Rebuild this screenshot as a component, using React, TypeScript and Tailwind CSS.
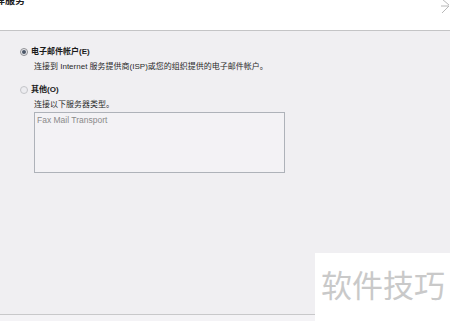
export default function App() {
  const font = { fontFamily: '"Liberation Sans", "Noto Sans CJK SC", sans-serif' };
  return (
    <div className="w-[450px] h-[321px] overflow-hidden flex flex-col bg-[#f0eff2] text-[#1a1a1a]" style={font}>
      <div className="h-[31px] shrink-0 bg-white flex justify-between border-b border-[#c4c4c6]">
        <span className="-ml-[15px] -mt-[6px] text-[10px] font-bold leading-[14px] text-[#202020]">选择服务</span>
        <svg width="10" height="16" viewBox="0 0 10 16" className="-mt-[1px]">
          <path d="M2 0 L9 6 M1 7 L9 7 M2 14 L9 7" stroke="#b8b8b8" strokeWidth="1" fill="none" />
        </svg>
      </div>

      <div className="flex-1 flex">
        <div className="flex-1 flex flex-col pl-[20px] pt-[15px]">
          <label className="flex items-center gap-[3px] h-[12px]">
            <span className="w-[8px] h-[8px] rounded-full border border-[#8e8f93] bg-[#eaeaee] flex items-center justify-center">
              <span className="w-[4px] h-[4px] rounded-full bg-[#4a5566]" />
            </span>
            <span className="text-[8px] font-bold leading-[12px]">电子邮件帐户(E)</span>
          </label>
          <p className="ml-[14px] mt-[3px] text-[8px] leading-[12px] text-[#2a2a2a]">
            连接到 Internet 服务提供商(ISP)或您的组织提供的电子邮件帐户。
          </p>
          <label className="flex items-center gap-[3px] h-[12px] mt-[11px]">
            <span className="w-[8px] h-[8px] rounded-full border border-[#c4c5c9] bg-[#ececf0]" />
            <span className="text-[8px] font-bold leading-[12px]">其他(O)</span>
          </label>
          <p className="ml-[14px] mt-[3px] text-[8px] leading-[12px] text-[#2a2a2a]">连接以下服务器类型。</p>
          <div className="ml-[14px] mt-[1px] w-[251px] h-[61px] border border-[#aeb2b9] bg-[#f3f2f5] px-[2px] pt-[2px] text-[8.5px] leading-[11px] text-[#8a8a8a]">
            Fax Mail Transport
          </div>
        </div>
      </div>

      <div className="h-[68px] shrink-0 flex items-stretch">
        <div className="flex-1 flex flex-col justify-end">
          <div className="h-[7px] border-t border-[#c8c8ca] bg-[#f4f3f6]" />
        </div>
        <div className="w-[135px] bg-white flex items-start pt-[13px] pl-[6px]">
          <span className="text-[31px] leading-[36px] text-[#c9c9c9]" style={{ fontFamily: '"Noto Sans CJK SC", sans-serif' }}>
            软件技巧
          </span>
        </div>
      </div>
    </div>
  );
}
